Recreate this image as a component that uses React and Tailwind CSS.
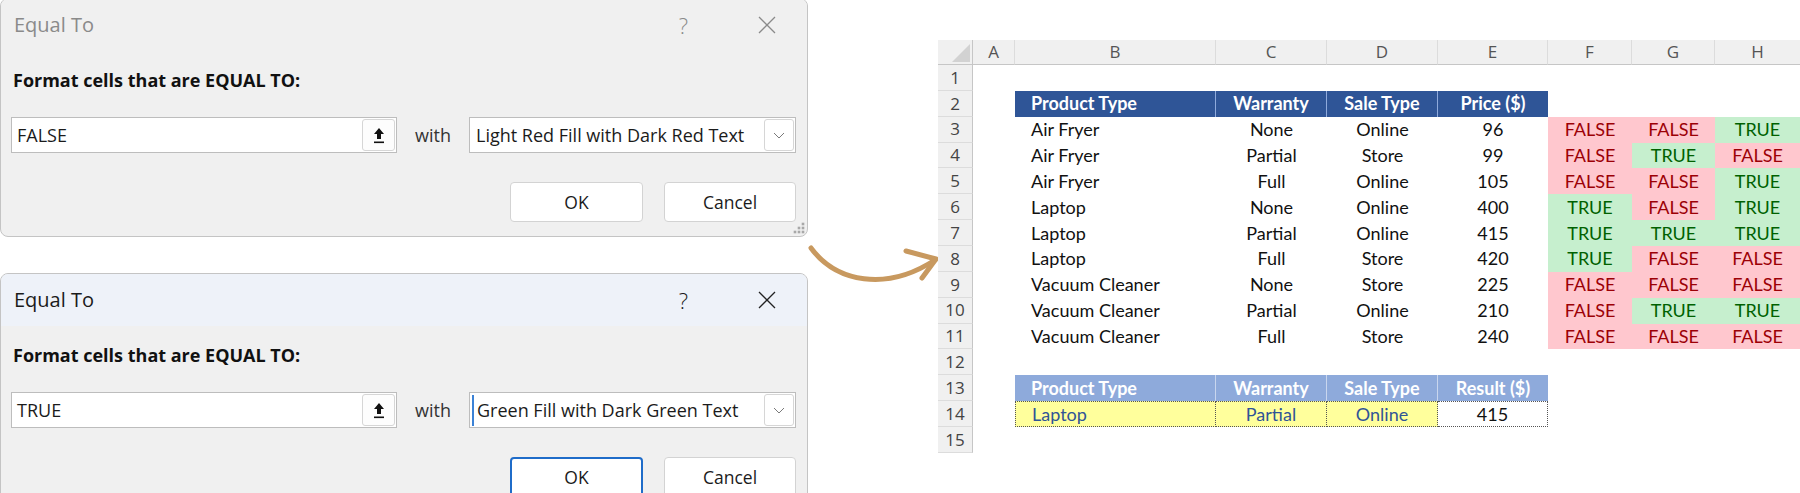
import React from "react";

const rows = [
  ["Air Fryer", "None", "Online", "96", [0, 0, 1]],
  ["Air Fryer", "Partial", "Store", "99", [0, 1, 0]],
  ["Air Fryer", "Full", "Online", "105", [0, 0, 1]],
  ["Laptop", "None", "Online", "400", [1, 0, 1]],
  ["Laptop", "Partial", "Online", "415", [1, 1, 1]],
  ["Laptop", "Full", "Store", "420", [1, 0, 0]],
  ["Vacuum Cleaner", "None", "Store", "225", [0, 0, 0]],
  ["Vacuum Cleaner", "Partial", "Online", "210", [0, 1, 1]],
  ["Vacuum Cleaner", "Full", "Store", "240", [0, 0, 0]],
];

const letters = ["A", "B", "C", "D", "E", "F", "G", "H"];

const CloseIcon = ({ color }) => (
  <svg width="18" height="18" viewBox="0 0 18 18">
    <path d="M1 1 L17 17 M17 1 L1 17" stroke={color} strokeWidth="1.3" fill="none" />
  </svg>
);

const UploadIcon = () => (
  <svg width="12" height="17" viewBox="0 0 12 17">
    <path d="M6 1 L11 7 H8 V12 H4 V7 H1 Z" fill="#111" />
    <rect x="1" y="14.5" width="10" height="1.6" fill="#111" />
  </svg>
);

const Chevron = () => (
  <svg width="12" height="7" viewBox="0 0 12 7">
    <polyline points="1,1 6,6 11,1" stroke="#7a7a7a" strokeWidth="1" fill="none" />
  </svg>
);

const Grip = () => (
  <svg width="14" height="14" viewBox="0 0 14 14">
    {[
      [11, 3],
      [7, 7],
      [11, 7],
      [3, 11],
      [7, 11],
      [11, 11],
    ].map(([cx, cy]) => (
      <rect key={`${cx}-${cy}`} x={cx - 1.3} y={cy - 1.3} width="2.6" height="2.6" fill="#a8a8a8" />
    ))}
  </svg>
);

function Dialog({ active, value, option, className }) {
  const muted = active ? "text-[#1b1b1b]" : "text-[#8a8a8a]";
  return (
    <div
      className={`relative w-[808px] h-[239px] shrink-0 bg-[#f0f0f0] border border-[#c4c4c4] rounded-[8px] overflow-hidden ${className}`}
    >
      {/* title bar */}
      <div className={`h-[52px] flex items-center pl-[13px] pr-[31px] ${active ? "bg-[#eef2f9]" : "bg-[#f0f0f0]"}`}>
        <span className={`text-[20px] ${muted}`}>Equal To</span>
        <span className={`ml-auto mr-[70px] text-[22px] font-light ${muted}`}>?</span>
        <CloseIcon color={active ? "#222" : "#8a8a8a"} />
      </div>

      <div className="px-[10px]">
        <div className="mt-[18px] h-[22px] leading-[22px] text-[18px] font-bold text-[#111] pl-[2px]">
          Format cells that are EQUAL TO:
        </div>

        <div className="mt-[26px] h-[36px] flex items-stretch">
          <div className="w-[386px] bg-white border border-[#bdbdbd] flex items-center">
            <span className="pl-[5px] text-[18px] text-[#1b1b1b]">{value}</span>
            <div className="ml-auto mr-[1px] w-[33px] h-[32px] bg-[#fdfdfd] border border-[#d6d6d6] rounded-[3px] flex items-center justify-center">
              <UploadIcon />
            </div>
          </div>
          <div className="w-[72px] flex items-center justify-center text-[18px] text-[#333]">with</div>
          <div className="w-[327px] bg-white border border-[#bdbdbd] flex items-center">
            {active && <div className="ml-[2px] w-[2px] h-[31px] bg-[#3b82d6]" />}
            <span className={`${active ? "pl-[3px]" : "pl-[6px]"} text-[18px] text-[#1b1b1b] whitespace-nowrap`}>{option}</span>
            <div className="ml-auto mr-[1px] w-[30px] h-[32px] shrink-0 bg-white border border-[#d6d6d6] rounded-[3px] flex items-center justify-center">
              <Chevron />
            </div>
          </div>
        </div>

        <div className="mt-[29px] flex justify-end gap-[21px] pr-[1px]">
          <button
            className={`w-[133px] h-[40px] bg-white rounded-[4px] text-[17.5px] text-[#1b1b1b] ${
              active ? "border-2 border-[#1f6cc9]" : "border border-[#d3d3d3]"
            }`}
          >
            OK
          </button>
          <button className="w-[132px] h-[40px] bg-white border border-[#d3d3d3] rounded-[4px] text-[17.5px] text-[#1b1b1b]">
            Cancel
          </button>
        </div>
      </div>

      {!active && (
        <div className="absolute right-[1px] bottom-[1px]">
          <Grip />
        </div>
      )}
    </div>
  );
}

const Arrow = () => (
  <svg width="130" height="493" viewBox="0 0 130 493" className="block">
    <path
      d="M3 248 C 28 282, 78 292, 127 260"
      stroke="#c8995f"
      strokeWidth="5"
      fill="none"
      strokeLinecap="round"
    />
    <path
      d="M98 251 L128 259 L114 278"
      stroke="#c8995f"
      strokeWidth="5"
      fill="none"
      strokeLinecap="round"
      strokeLinejoin="round"
    />
  </svg>
);

const Corner = () => (
  <svg width="34" height="24" viewBox="0 0 34 24" className="block">
    <polygon points="32,4 32,22 14,22" fill="#d2d2d2" />
  </svg>
);

function RowNum({ n }) {
  return (
    <div className="bg-[#f0f0f0] border-r border-[#c6c6c6] border-b border-b-[#dcdcdc] flex items-center justify-center text-[17px] text-[#444] font-['Open_Sans',sans-serif]">
      {n}
    </div>
  );
}

function Flag({ v }) {
  return v ? (
    <div className="bg-[#c6efce] text-[#006100] flex items-center justify-center">TRUE</div>
  ) : (
    <div className="bg-[#ffc7ce] text-[#9c0006] flex items-center justify-center">FALSE</div>
  );
}

function Sheet() {
  const blank = <div />;
  return (
    <div className="pt-[40px] w-[862px]">
      <div className="grid grid-cols-[35px_42px_201px_111px_111px_110px_84px_83px_85px] grid-rows-[25px_repeat(15,25.87px)] font-['Lato',sans-serif] text-[18px] text-[#111]">
        {/* column headers */}
        <div className="bg-[#f0f0f0] border-r border-[#c6c6c6] border-b border-b-[#c6c6c6]">
          <Corner />
        </div>
        {letters.map((l, i) => (
          <div
            key={l}
            className={`bg-[#f0f0f0] border-b border-[#c6c6c6] flex items-center justify-center text-[17px] text-[#555] font-['Open_Sans',sans-serif] ${
              i < 7 ? "border-r border-r-[#dcdcdc]" : ""
            }`}
          >
            {l}
          </div>
        ))}

        {/* row 1 */}
        <RowNum n={1} />
        {letters.map((l) => (
          <div key={`r1${l}`} />
        ))}

        {/* row 2 */}
        <RowNum n={2} />
        {blank}
        <div className="bg-[#2f5597] text-white font-bold flex items-center pl-[16px] border-r border-[#8faadc]">Product Type</div>
        <div className="bg-[#2f5597] text-white font-bold flex items-center justify-center border-r border-[#8faadc]">Warranty</div>
        <div className="bg-[#2f5597] text-white font-bold flex items-center justify-center border-r border-[#8faadc]">Sale Type</div>
        <div className="bg-[#2f5597] text-white font-bold flex items-center justify-center">Price ($)</div>
        <div />
        <div />
        <div />

        {/* data rows */}
        {rows.map((r, i) => (
          <React.Fragment key={`d${i}`}>
            <RowNum n={i + 3} />
            <div />
            <div className="flex items-center pl-[16px]">{r[0]}</div>
            <div className="flex items-center justify-center">{r[1]}</div>
            <div className="flex items-center justify-center">{r[2]}</div>
            <div className="flex items-center justify-center">{r[3]}</div>
            {r[4].map((v, j) => (
              <Flag key={`f${i}${j}`} v={v} />
            ))}
          </React.Fragment>
        ))}

        {/* row 12 */}
        <RowNum n={12} />
        {letters.map((l) => (
          <div key={`r12${l}`} />
        ))}

        {/* row 13 */}
        <RowNum n={13} />
        <div />
        <div className="bg-[#8eaadb] text-white font-bold flex items-center pl-[16px] border-r border-[#c9d6ee]">Product Type</div>
        <div className="bg-[#8eaadb] text-white font-bold flex items-center justify-center border-r border-[#c9d6ee]">Warranty</div>
        <div className="bg-[#8eaadb] text-white font-bold flex items-center justify-center border-r border-[#c9d6ee]">Sale Type</div>
        <div className="bg-[#8eaadb] text-white font-bold flex items-center justify-center">Result ($)</div>
        <div />
        <div />
        <div />

        {/* row 14 */}
        <RowNum n={14} />
        <div />
        <div className="bg-[#ffff9c] text-[#305496] flex items-center pl-[16px] border border-dotted border-[#555]">Laptop</div>
        <div className="bg-[#ffff9c] text-[#305496] flex items-center justify-center border-y border-r border-dotted border-[#555]">Partial</div>
        <div className="bg-[#ffff9c] text-[#305496] flex items-center justify-center border-y border-r border-dotted border-[#555]">Online</div>
        <div className="bg-white flex items-center justify-center border-y border-r border-dotted border-[#555]">415</div>
        <div />
        <div />
        <div />

        {/* row 15 */}
        <RowNum n={15} />
        {letters.map((l) => (
          <div key={`r15${l}`} />
        ))}
      </div>
    </div>
  );
}

export default function App() {
  return (
    <div className="w-[1800px] h-[493px] bg-white flex overflow-hidden font-['Open_Sans',sans-serif]">
      <div className="w-[808px] shrink-0 flex flex-col">
        <Dialog className="mt-[-2px]" value="FALSE" option="Light Red Fill with Dark Red Text" />
        <Dialog className="mt-[36px]" active value="TRUE" option="Green Fill with Dark Green Text" />
      </div>
      <div className="w-[130px] shrink-0">
        <Arrow />
      </div>
      <Sheet />
    </div>
  );
}
